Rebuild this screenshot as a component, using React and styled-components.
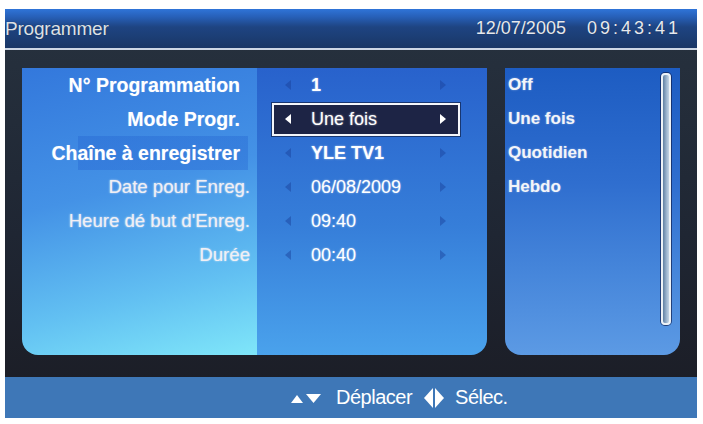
import React from 'react';
import styled, { createGlobalStyle } from 'styled-components';

const Global = createGlobalStyle`
  html, body { margin: 0; padding: 0; background: #ffffff; }
  body { font-family: "Liberation Sans", Arial, sans-serif; }
`;

const Page = styled.div`
  width: 703px;
  height: 424px;
  box-sizing: border-box;
  padding: 9px 6px 6px 5px;
  background: #ffffff;
  overflow: hidden;
`;

const Screen = styled.div`
  width: 692px;
  height: 409px;
  display: flex;
  flex-direction: column;
  overflow: hidden;
  background: linear-gradient(180deg, #27323f 0%, #1f2633 55%, #1b1c24 100%);
`;

const Header = styled.header`
  flex: none;
  height: 39px;
  display: flex;
  align-items: center;
  justify-content: space-between;
  padding-right: 16px;
  border-bottom: 2px solid #cdd7e5;
  background: linear-gradient(180deg, #2f74d8 0%, #2760b8 20%, #1e4482 46%, #1a3766 100%);
  color: #dde1e7;
  text-shadow: 0 0 1px rgba(0, 0, 0, 0.4);
`;

const Title = styled.div`
  font-size: 19px;
  letter-spacing: -0.2px;
`;

const Clock = styled.div`
  display: flex;
  align-items: center;
  font-size: 18px;
  color: #e6e9ee;
`;

const Time = styled.span`
  margin-left: 21px;
  letter-spacing: 3px;
`;

const Body = styled.main`
  flex: 1;
  display: flex;
  gap: 18px;
  padding: 18px 17px 22px;
  min-height: 0;
`;

const SettingsPanel = styled.section`
  width: 465px;
  display: flex;
  border-radius: 0 0 16px 16px;
  overflow: hidden;
`;

const LabelColumn = styled.div`
  width: 235px;
  display: flex;
  flex-direction: column;
  background: linear-gradient(166deg, #3378dc 0%, #4492e6 42%, #62c0f2 75%, #7fe6f9 100%);
`;

const ValueColumn = styled.div`
  flex: 1;
  display: flex;
  flex-direction: column;
  background: linear-gradient(180deg, #2862cc 0%, #367ed9 55%, #4aa2ec 100%);
`;

const Label = styled.div`
  height: 34px;
  flex: none;
  display: flex;
  align-items: center;
  justify-content: flex-end;
  padding-right: ${p => (p.$strong ? '17px' : '7px')};
  font-size: ${p => (p.$strong ? '19.5px' : '18.6px')};
  font-weight: ${p => (p.$strong ? 700 : 400)};
  color: ${p => (p.$strong ? '#ffffff' : '#f1eff4')};
  text-shadow: ${p => (p.$strong ? '0 0 1px rgba(255,255,255,0.4)' : '0 0 2px rgba(255,255,255,0.8)')};
  background: ${p =>
    p.$band
      ? 'linear-gradient(90deg, transparent 56px, rgba(30, 92, 205, 0.32) 56px, rgba(30, 92, 205, 0.32) 226px, transparent 226px)'
      : 'none'};
  white-space: nowrap;
`;

const ValueRow = styled.div`
  height: 34px;
  flex: none;
  display: flex;
  align-items: center;
`;

const ValueBox = styled.div`
  margin-left: 15px;
  width: 188px;
  height: 33px;
  box-sizing: border-box;
  display: flex;
  align-items: center;
  padding: 0 12px 0 11px;
  border: 2px solid ${p => (p.$selected ? '#f4f6fa' : 'transparent')};
  background: ${p => (p.$selected ? '#1d2445' : 'transparent')};
  box-shadow: ${p => (p.$selected ? '0 0 0 1px rgba(10,20,50,0.6)' : 'none')};
`;

const ValueText = styled.span`
  flex: 1;
  margin-left: 20px;
  font-size: 18px;
  font-weight: ${p => (p.$bold ? 700 : 400)};
  color: #ffffff;
  text-shadow: 0 0 2px rgba(255, 255, 255, 0.6);
  white-space: nowrap;
`;

const ArrowSvg = styled.svg`
  flex: none;
  display: block;
`;

const Arrow = ({ dir, bright }) => (
  <ArrowSvg width="6" height="10" viewBox="0 0 6 10">
    <polygon
      points={dir === 'left' ? '6,0 0,5 6,10' : '0,0 6,5 0,10'}
      fill={bright ? '#ffffff' : 'rgba(24, 62, 150, 0.45)'}
    />
  </ArrowSvg>
);

const OptionsPanel = styled.aside`
  flex: 1;
  display: flex;
  border-radius: 0 0 16px 16px;
  background: linear-gradient(180deg, #1d5cc2 0%, #2f6ecf 40%, #4585da 70%, #5c9ae4 100%);
`;

const OptionList = styled.ul`
  flex: 1;
  list-style: none;
  margin: 0;
  padding: 0 0 0 3px;
`;

const Option = styled.li`
  height: 34px;
  display: flex;
  align-items: center;
  font-size: 17px;
  font-weight: 700;
  color: #f3f5f9;
  text-shadow: 0 0 2px rgba(255, 255, 255, 0.45);
`;

const Scrollbar = styled.div`
  flex: none;
  width: 10px;
  height: 252px;
  margin: 5px 9px 0 0;
  box-sizing: border-box;
  border: 2px solid #eef2f6;
  border-radius: 4px;
  background: linear-gradient(90deg, #5f7fa2 0%, #9fb6cf 60%, #c4d4e4 100%);
  box-shadow: 0 0 0 1px rgba(16, 32, 80, 0.7);
`;

const Footer = styled.footer`
  flex: none;
  height: 41px;
  display: flex;
  align-items: center;
  padding-left: 284px;
  background: #3e77b7;
  color: #ffffff;
  font-size: 20px;
  letter-spacing: -0.5px;
`;

const HintText = styled.span`
  margin: ${p => p.$margin};
`;

const UpDown = () => (
  <svg width="33" height="12" viewBox="0 0 33 12" style={{ display: 'block' }}>
    <polygon points="2,11 8,3 14,11" fill="#ffffff" />
    <polygon points="17,2 32,2 24.5,11" fill="#ffffff" />
  </svg>
);

const LeftRight = () => (
  <svg width="20" height="20" viewBox="0 0 20 20" style={{ display: 'block', margin: '0 11px 0 12px' }}>
    <polygon points="9,0 0,10 9,20" fill="#ffffff" />
    <polygon points="11,0 20,10 11,20" fill="#ffffff" />
  </svg>
);

const rows = [
  { label: 'N° Programmation', value: '1', strong: true, bold: true },
  { label: 'Mode Progr.', value: 'Une fois', strong: true, selected: true },
  { label: 'Chaîne à enregistrer', value: 'YLE TV1', strong: true, bold: true, band: true },
  { label: 'Date pour Enreg.', value: '06/08/2009' },
  { label: "Heure dé but d'Enreg.", value: '09:40' },
  { label: 'Durée', value: '00:40' },
];

const options = ['Off', 'Une fois', 'Quotidien', 'Hebdo'];

export default function App() {
  return (
    <>
      <Global />
      <Page>
        <Screen>
          <Header>
            <Title>Programmer</Title>
            <Clock>
              <span>12/07/2005</span>
              <Time>09:43:41</Time>
            </Clock>
          </Header>
          <Body>
            <SettingsPanel>
              <LabelColumn>
                {rows.map(r => (
                  <Label key={r.label} $strong={r.strong} $band={r.band}>
                    {r.label}
                  </Label>
                ))}
              </LabelColumn>
              <ValueColumn>
                {rows.map(r => (
                  <ValueRow key={r.label}>
                    <ValueBox $selected={r.selected}>
                      <Arrow dir="left" bright={r.selected} />
                      <ValueText $bold={r.bold}>{r.value}</ValueText>
                      <Arrow dir="right" bright={r.selected} />
                    </ValueBox>
                  </ValueRow>
                ))}
              </ValueColumn>
            </SettingsPanel>
            <OptionsPanel>
              <OptionList>
                {options.map(o => (
                  <Option key={o}>{o}</Option>
                ))}
              </OptionList>
              <Scrollbar />
            </OptionsPanel>
          </Body>
          <Footer>
            <UpDown />
            <HintText $margin="0 0 0 14px">Déplacer</HintText>
            <LeftRight />
            <HintText $margin="0">Sélec.</HintText>
          </Footer>
        </Screen>
      </Page>
    </>
  );
}
